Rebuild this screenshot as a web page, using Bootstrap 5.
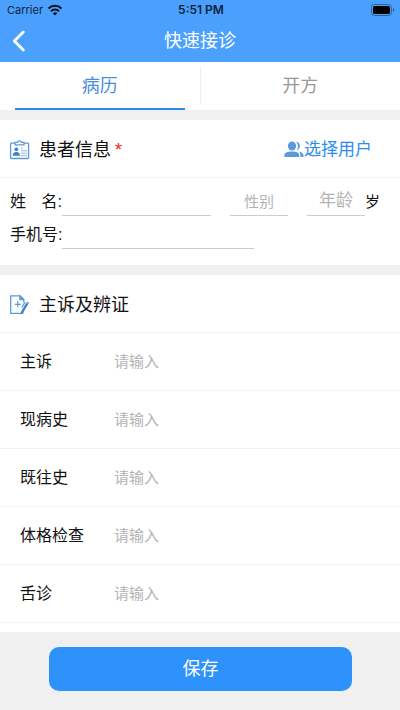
<!DOCTYPE html>
<html lang="zh-CN">
<head>
<meta charset="utf-8">
<meta name="viewport" content="width=device-width, initial-scale=1">
<title>快速接诊</title>
<link href="https://cdn.jsdelivr.net/npm/bootstrap@5.3.0/dist/css/bootstrap.min.css" rel="stylesheet">
<style>
  body { font-family: "Liberation Sans", "Noto Sans CJK SC", sans-serif; color: #111; background: #fff; font-size: 16px; line-height: 24px; }
  .app-header { background: #4aa0fc; }
  .status-bar { height: 20px; font-family: Inter, sans-serif; font-size: 11px; line-height: 20px; color: #10233b; padding: 0 5px 0 7px; }
  .status-bar .clock { font-size: 12px; font-weight: 600; }
  .title-bar { height: 42px; padding: 0 12px; }
  .title-bar h1, .section-head h2, .tab-btn, .save-btn { font-size: 18px; line-height: 26px; font-weight: 400; }
  .side { flex: 1 1 0; }
  .tab-btn { height: 48px; color: #999; border: 0; border-radius: 0; background: none; padding: 0; width: 100%; }
  .tab-cell { padding: 0 15px; }
  .tab-btn.active { color: #4a90d9; border-top: 2px solid transparent; border-bottom: 2px solid #2f86e6; }
  .tab-rule { width: 1px; margin: 5px 0; background: #eee; }
  .band { height: 10px; background: #f0f0f0; }
  .section-head { height: 58px; padding: 2px 28px 0 9px; border-bottom: 1px solid #f2f2f2; }
  .section-head h2 { padding-left: 9px; }
  .required { color: #f22; font-size: 18px; line-height: 20px; padding-left: 4px; }
  .pick-user { color: #2c8df0; font-size: 17px; line-height: 26px; }
  .patient { padding: 7px 20px 14px 10px; }
  .patient .line { height: 33px; }
  .patient .key { flex: none; width: 52px; white-space: nowrap; }
  .plain { border: 0; border-radius: 0; background: transparent; padding: 0; outline: 0; min-width: 0; color: #111; box-shadow: none; }
  .plain::placeholder { color: #b3b3b3; opacity: 1; }
  .under { border-bottom: 1px solid #ccc; height: 29px; }
  .name-input { flex: 149 1 0; }
  .small-input { flex: 58 1 0; font-size: 15px; }
  .age-input { font-size: 17px; }
  .age-unit { flex: none; font-size: 15px; width: 15px; }
  .phone-input { width: 52%; }
  .sex-gap { margin-left: 19px; }
  .field-row { height: 58px; padding: 0 20px; border-bottom: 1px solid #f2f2f2; }
  .field-row label { flex: none; width: 94px; font-size: 16px; }
  .field-row .plain { font-size: 15px; height: 36px; }
  .save-bar { background: #f0f0f0; padding: 15px 48px 19px 49px; }
  .save-btn { height: 44px; border: 0; border-radius: 10px; background: #2d92fb; color: #fff; padding: 0; }
  .save-btn:hover { background: #2386ee; color: #fff; }
</style>
<script src="https://cdn.jsdelivr.net/npm/bootstrap@5.3.0/dist/js/bootstrap.bundle.min.js"></script>
</head>
<body class="d-flex flex-column min-vh-100">
<header class="app-header">
  <div class="status-bar d-flex align-items-center">
    <div class="side d-flex align-items-center gap-1">
      <span>Carrier</span>
      <svg width="16" height="12" viewBox="0 0 16 12" fill="none" stroke="#07121f" stroke-width="2" aria-hidden="true"><path d="M1.5 4.5a9.3 9.3 0 0 1 13 0M4 7.2a5.7 5.7 0 0 1 8 0"/><path d="M8 11.5 5.8 9.3a3.2 3.2 0 0 1 4.4 0z" fill="#07121f" stroke="none"/></svg>
    </div>
    <span class="clock">5:51 PM</span>
    <div class="side d-flex justify-content-end">
      <svg width="24" height="12" viewBox="0 0 24 12" aria-hidden="true"><rect x=".5" y=".5" width="20" height="11" rx="3" fill="none" stroke="#2e6299"/><rect x="2" y="2" width="17" height="8" rx="1.6" fill="#000"/><path d="M22 4v4c1.8-.7 1.8-3.3 0-4z" fill="#2e6299"/></svg>
    </div>
  </div>
  <div class="title-bar d-flex align-items-center text-white">
    <div class="side d-flex">
      <button type="button" class="btn p-0 border-0 text-white d-flex" aria-label="返回"><svg width="14" height="22" viewBox="0 0 14 22" fill="none" stroke="currentColor" stroke-width="2.8" stroke-linecap="round" stroke-linejoin="round"><path d="M11.3 2 2.3 11l9 9"/></svg></button>
    </div>
    <h1 class="m-0">快速接诊</h1>
    <div class="side"></div>
  </div>
</header>

<main class="flex-grow-1">
  <nav class="d-flex" aria-label="接诊">
    <div class="tab-cell flex-fill"><button type="button" class="tab-btn active" aria-current="page">病历</button></div>
    <div class="tab-rule"></div>
    <div class="tab-cell flex-fill"><button type="button" class="tab-btn">开方</button></div>
  </nav>
  <div class="band"></div>

  <section>
    <div class="section-head d-flex align-items-center">
      <svg width="21" height="21" viewBox="0 0 21 21" fill="none" stroke="#5b9bd9" stroke-width="1.3" aria-hidden="true"><rect x="1.6" y="4.2" width="18" height="15.3" rx=".8"/><path d="M6 5.8V3.4h2.4a2.2 2.2 0 0 1 4.2 0H15v2.4z" fill="#fff"/><path d="M12 9.2h2M12 11.8h6M12 14.2h6M12 16.6h6" stroke-width="1" stroke="#8bb8e4"/><circle cx="7.3" cy="10.3" r="1.9" fill="#3f82c6" stroke="none"/><path d="M3.6 16.8c0-2.5 1.4-3.9 3.7-3.9s3.7 1.4 3.7 3.9z" fill="#3f82c6" stroke="none"/></svg>
      <h2 class="m-0">患者信息</h2><span class="required">*</span>
      <button type="button" class="pick-user btn p-0 border-0 ms-auto d-flex align-items-center">
        <svg width="20" height="17" viewBox="0 0 20 17" fill="#5b9bd9" aria-hidden="true"><ellipse cx="8" cy="5" rx="4.1" ry="4.5"/><path d="M.4 16v-2.1c0-2.1 2.8-3.5 7.6-3.5s7.2 1.4 7.2 3.5V16z"/><path d="M11.9.7c5.2.2 5.1 7.6.7 8.6 1.8-2.4 1.8-6-.7-8.6zM14.7 10.4c3.1.7 4.8 1.8 4.8 3.6v2h-3.1v-2c0-1.4-.5-2.6-1.7-3.6z"/></svg>
        <span>选择用户</span>
      </button>
    </div>
    <div class="patient">
      <div class="line d-flex align-items-center">
        <label for="name" class="key d-flex justify-content-between"><span>姓</span><span>名:</span></label>
        <input id="name" type="text" class="plain under name-input">
        <input type="text" class="plain under small-input sex-gap text-center" placeholder="性别" aria-label="性别">
        <input id="age" type="text" class="plain under small-input age-input sex-gap text-center" placeholder="年龄">
        <label for="age" class="age-unit">岁</label>
      </div>
      <div class="line d-flex align-items-center">
        <label for="phone" class="key">手机号:</label>
        <input id="phone" type="tel" class="plain under phone-input">
      </div>
    </div>
  </section>
  <div class="band"></div>

  <section>
    <div class="section-head d-flex align-items-center">
      <svg width="21" height="21" viewBox="0 0 21 21" fill="none" stroke="#5b9bd9" stroke-width="1.3" aria-hidden="true"><path d="M13.8 16.5v2.8H1.7V1.8h9.5l3.5 3.5v3"/><path d="M10.9 2v3.6h3.6z" fill="#5b9bd9"/><path d="M8.8 7.3v6M5.8 10.3h6"/><path d="m18.3 9.4-5.2 8.8" stroke="#3f82c6" stroke-width="2.4"/><path d="m12 17.3-.3 3 2.6-1.8z" fill="#3f82c6" stroke="none"/><path d="m16 8.1-3.3 5.4M17.9 8.2l2 1.2"/></svg>
      <h2 class="m-0">主诉及辨证</h2>
    </div>
    <div class="field-row d-flex align-items-center"><label for="f1">主诉</label><input id="f1" type="text" class="plain flex-fill" placeholder="请输入"></div>
    <div class="field-row d-flex align-items-center"><label for="f2">现病史</label><input id="f2" type="text" class="plain flex-fill" placeholder="请输入"></div>
    <div class="field-row d-flex align-items-center"><label for="f3">既往史</label><input id="f3" type="text" class="plain flex-fill" placeholder="请输入"></div>
    <div class="field-row d-flex align-items-center"><label for="f4">体格检查</label><input id="f4" type="text" class="plain flex-fill" placeholder="请输入"></div>
    <div class="field-row d-flex align-items-center"><label for="f5">舌诊</label><input id="f5" type="text" class="plain flex-fill" placeholder="请输入"></div>
  </section>
</main>

<footer class="save-bar position-sticky bottom-0">
  <button type="button" class="save-btn btn w-100">保存</button>
</footer>
</body>
</html>
